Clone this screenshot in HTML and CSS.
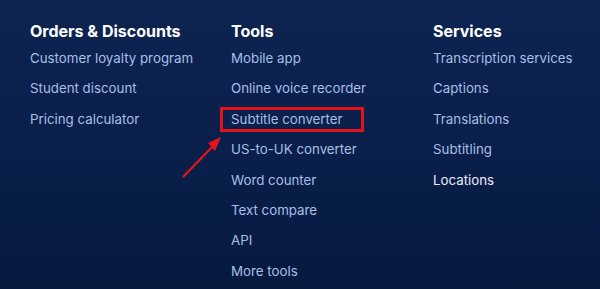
FILE: index.html
```html
<!DOCTYPE html>
<html lang="en">
<head>
    <meta charset="UTF-8">
    <title>Footer links</title>
    <link rel="stylesheet" href="styles.css">
</head>
<body>
    <div class="footer">
        <div class="column">
            <h3>Orders &amp; Discounts</h3>
            <a href="#">Customer loyalty program</a>
            <a href="#">Student discount</a>
            <a href="#">Pricing calculator</a>
        </div>
        <div class="column">
            <h3>Tools</h3>
            <a href="#">Mobile app</a>
            <a href="#">Online voice recorder</a>
            <a href="#" class="marked">Subtitle converter</a>
            <a href="#">US-to-UK converter</a>
            <a href="#">Word counter</a>
            <a href="#">Text compare</a>
            <a href="#">API</a>
            <a href="#">More tools</a>
            <svg class="arrow" width="44" height="46" viewBox="0 0 44 46">
                <line x1="1" y1="43" x2="33" y2="10" stroke="#e8131c" stroke-width="2.2"/>
                <polygon points="39,3 26,9 33,17" fill="#e8131c"/>
            </svg>
        </div>
        <div class="column">
            <h3>Services</h3>
            <a href="#">Transcription services</a>
            <a href="#">Captions</a>
            <a href="#">Translations</a>
            <a href="#">Subtitling</a>
            <a href="#" class="bright">Locations</a>
        </div>
    </div>
</body>
</html>
```

FILE: styles.css
```css
body {
    margin: 0;
    width: 600px;
    height: 289px;
    overflow: hidden;
    font-family: 'Inter', 'Liberation Sans', sans-serif;
    background: linear-gradient(180deg, #0e2451 0%, #0a1f4a 50%, #061a40 100%);
}
.footer {
    display: grid;
    grid-template-columns: 201px 202px 167px;
    padding: 20px 0 0 30px;
}
.column {
    position: relative;
    display: flex;
    flex-direction: column;
    align-items: flex-start;
}
h3 {
    margin: 0 0 1px;
    font-size: 16px;
    font-weight: 700;
    line-height: 22px;
    color: #ffffff;
}
a {
    font-size: 13.3px;
    line-height: 30.4px;
    color: #a8bfe6;
    text-decoration: none;
}
a.bright {
    color: #e9eef8;
}
a.marked {
    position: relative;
}
a.marked::after {
    content: "";
    position: absolute;
    left: -11px;
    right: -21px;
    top: 3px;
    bottom: 2px;
    border: 3px solid #e3121b;
}
.arrow {
    position: absolute;
    left: -49px;
    top: 114px;
}
```
